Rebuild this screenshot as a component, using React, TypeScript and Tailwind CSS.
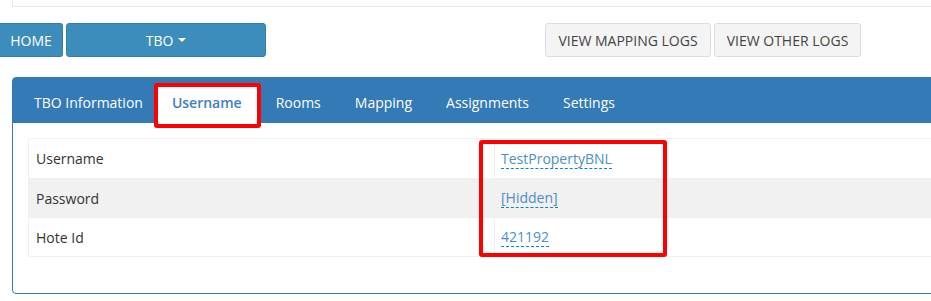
import React from "react";

const font = { fontFamily: '"Open Sans", "Liberation Sans", sans-serif' };

function Caret() {
  return (
    <span className="inline-block ml-[5px] align-middle w-0 h-0 border-l-[4px] border-r-[4px] border-t-[4px] border-l-transparent border-r-transparent border-t-white" />
  );
}

export default function App() {
  const tabs = ["TBO Information", "Username", "Rooms", "Mapping", "Assignments", "Settings"];
  const rows = [
    { label: "Username", value: "TestPropertyBNL" },
    { label: "Password", value: "[Hidden]" },
    { label: "Hote Id", value: "421192" },
  ];
  return (
    <div className="w-[931px] h-[301px] overflow-hidden bg-white text-[14px] text-[#333]" style={font}>
      <div className="w-[1100px]">
        <div className="ml-[12px] h-[7px] border-l border-b border-[#e9e9e9]" />
        <div className="flex mt-[16px] h-[34px]">
          <button className="w-[63px] h-[34px] bg-[#3c8dbc] border border-[#367fa9] border-l-0 rounded-r-[3px] text-white text-[14px]">
            HOME
          </button>
          <button className="ml-[3px] w-[200px] h-[34px] bg-[#3c8dbc] border border-[#367fa9] rounded-[3px] text-white text-[14px] flex items-center justify-center">
            TBO
            <Caret />
          </button>
          <button className="ml-[279px] w-[166px] h-[34px] bg-[#f4f4f4] border border-[#ddd] rounded-[3px] text-[#444] text-[14px]">
            VIEW MAPPING LOGS
          </button>
          <button className="ml-[3px] w-[147px] h-[34px] bg-[#f4f4f4] border border-[#ddd] rounded-[3px] text-[#444] text-[14px]">
            VIEW OTHER LOGS
          </button>
        </div>
        <div className="ml-[12px] mt-[20px] w-[1088px] h-[217px] border border-[#337ab7] rounded-[4px]">
          <div className="h-[45px] bg-[#337ab7] flex items-end pl-[6px] gap-[4px] text-[14px]">
            {tabs.map((t, i) =>
              t === "Username" ? (
                <div key={t} className="relative h-[38px] pl-[14px] pr-[15px] bg-white rounded-t-[3px] flex items-center pb-[3px] text-[#3c7fc4] font-semibold">
                  {t}
                  <div className="absolute left-[-4px] top-[-2px] right-[-4px] bottom-[-5px] border-[4px] border-[#ff0000] rounded-[3px]" />
                </div>
              ) : (
                <div
                  key={t}
                  className={`h-[38px] flex items-center pb-[3px] text-white font-medium ${i === 0 ? "pl-[15px] pr-[11px]" : "px-[15px]"}`}
                >
                  {t}
                </div>
              )
            )}
          </div>
          <div className="pt-[15px] px-[15px]">
            <div className="relative border border-[#f0f0f0]">
              {rows.map((r, i) => (
                <div
                  key={r.label}
                  className={`flex h-[39px] ${i > 0 ? "border-t border-[#f0f0f0]" : ""} ${i === 1 ? "bg-[#f1f1f1]" : "bg-white"}`}
                >
                  <div className="w-[466px] px-[7px] flex items-center border-r border-[#f0f0f0]">{r.label}</div>
                  <div className="px-[6px] flex items-center">
                    <span className="leading-[19px] text-[#4a8fc8] border-b border-dashed border-[#0088cc]">{r.value}</span>
                  </div>
                </div>
              ))}
              <div className="absolute left-[450px] top-[1px] w-[188px] h-[117px] border-[4px] border-[#ff0000] rounded-[3px]" />
            </div>
          </div>
        </div>
      </div>
    </div>
  );
}
